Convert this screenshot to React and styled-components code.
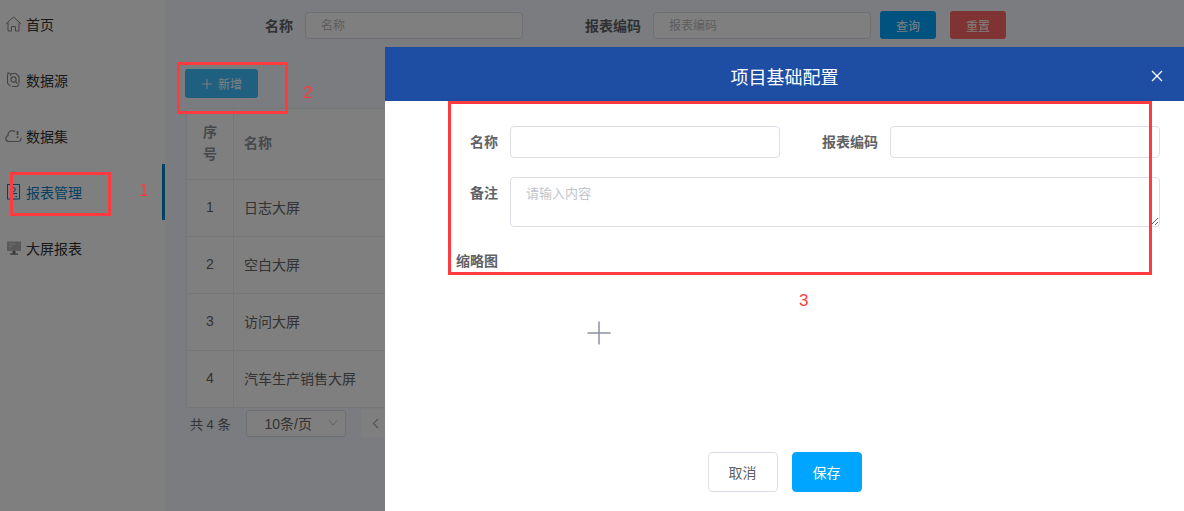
import React from 'react'
import styled, { createGlobalStyle } from 'styled-components'

const GlobalStyle = createGlobalStyle`
  html, body {
    margin: 0;
    padding: 0;
    height: 100%;
    overflow: hidden;
    background: #fff;
    font-family: "Liberation Sans", "Noto Sans CJK SC", sans-serif;
    font-size: 14px;
  }
  * {
    box-sizing: border-box;
  }
`

const menu = [
  { name: '首页', icon: 'home' },
  { name: '数据源', icon: 'source' },
  { name: '数据集', icon: 'cloud' },
  { name: '报表管理', icon: 'report', active: true },
  { name: '大屏报表', icon: 'screen' }
]

const reports = ['日志大屏', '空白大屏', '访问大屏', '汽车生产销售大屏']

const NavIcon = ({ type }) => {
  if (type === 'home') {
    return (
      <svg width="17" height="16" viewBox="0 0 17 16" fill="none" stroke="currentColor" strokeWidth="1">
        <path d="M.8 8 8.500 1l7.700 7" />
        <path d="M3 6.500V15h3.500v-4.500h4V15H14V6.500" />
      </svg>
    )
  }
  if (type === 'source') {
    return (
      <svg width="17" height="16" viewBox="0 0 17 16" fill="none" stroke="currentColor" strokeWidth="1.100">
        <path d="M5.500 1.500 3 1 2.500 4v7l3 3.500" />
        <path d="M5 3.500 7 1.500h4l3 3v7" />
        <path d="M14 12.500l-2 2H7" />
        <circle cx="8.500" cy="7.500" r="2.600" />
        <path d="M10.500 9.500l2 2" />
      </svg>
    )
  }
  if (type === 'cloud') {
    return (
      <svg width="17" height="16" viewBox="0 0 17 16" fill="none" stroke="currentColor" strokeWidth="1.200">
        <path d="M13.500 13.500H3.800A3 3 0 0 1 3 7.600 4.400 4.400 0 0 1 10 3.500" />
        <path d="M13.500 13.500a2.800 2.800 0 0 0 2.400-3.500" />
        <path d="M12.500 3v4M12.500 8.500v1.500" strokeWidth="1.800" />
      </svg>
    )
  }
  if (type === 'report') {
    return (
      <svg width="17" height="16" viewBox="0 0 17 16" fill="none" stroke="currentColor" strokeWidth="1">
        <rect x="2.500" y=".5" width="12" height="14.500" />
        <circle cx="8.500" cy="5.500" r="1.800" />
        <path d="M5 9.500h7M5 12.500h1.500M10.500 12.500H12" />
      </svg>
    )
  }
  return (
    <svg width="17" height="16" viewBox="0 0 17 16" fill="#b4b4b4">
      <path d="M2 1.500h14v9.500H2z" />
      <path d="M4 3.500h6v1H4zM4 6h3v1H4z" fill="#e2e2e2" />
      <path d="M7.500 11h3v2.500h-3zM5 13.500h8v1.200H5z" fill="#777" />
    </svg>
  )
}

const Shell = styled.div`
  display: flex;
  height: 100vh;
  overflow: hidden;
  background: #f6f8fe;
`

const Sidebar = styled.aside`
  flex: none;
  width: 165px;
  background: #fff;
  margin-top: -4px;
`

const NavItem = styled.div`
  display: flex;
  align-items: center;
  gap: 4px;
  height: 56px;
  padding-left: 5px;
  color: ${props => (props.$active ? '#0a7fc4' : '#333')};
  border-right: 3px solid ${props => (props.$active ? '#0a7fc4' : 'transparent')};
  svg {
    color: ${props => (props.$active ? '#0a7fc4' : '#888')};
  }
`

const Main = styled.main`
  flex: 1;
  min-width: 0;
  padding: 11px 0 0 21px;
`

const FilterBar = styled.div`
  display: flex;
  align-items: center;
  padding-left: 79px;
  height: 28px;
`

const FilterLabel = styled.label`
  font-weight: bold;
  color: #606266;
  margin-right: 12px;
  margin-left: ${props => props.$offset || 0}px;
`

const FilterInput = styled.div`
  width: 218px;
  height: 27px;
  margin-top: 1px;
  padding-left: 15px;
  border: 1px solid #dcdfe6;
  border-radius: 4px;
  background: #fff;
  font-size: 12px;
  line-height: 26px;
  color: #bbb;
`

const QueryButton = styled.button`
  width: 56px;
  height: 28px;
  margin-left: ${props => props.$offset}px;
  padding: 0;
  border: none;
  border-radius: 3px;
  background: ${props => props.$bg};
  color: #fff;
  font: inherit;
  font-size: 12px;
`

const AddButton = styled.button`
  display: flex;
  align-items: center;
  justify-content: center;
  gap: 5px;
  width: 73px;
  height: 29px;
  margin: 30px 0 10px -1px;
  padding: 0;
  border: none;
  border-radius: 3px;
  background: #3ebfff;
  color: #fff;
  font: inherit;
  font-size: 12px;
`

const Table = styled.table`
  width: 998px;
  border-collapse: collapse;
  table-layout: fixed;
  background: #fff;
  color: #666;
  th, td {
    border: 1px solid #ebeef5;
    padding: 0 10px 3px;
    text-align: left;
    font-weight: normal;
  }
  th {
    height: 71px;
    font-weight: bold;
    color: #909399;
    line-height: 22px;
  }
  td {
    height: 57px;
  }
  th:first-child, td:first-child {
    text-align: center;
  }
`

const Pagination = styled.div`
  display: flex;
  align-items: center;
  margin-top: 1px;
  padding-left: 4px;
  color: #666;
  font-size: 13px;
`

const PageSelect = styled.div`
  display: flex;
  align-items: center;
  justify-content: space-between;
  width: 100px;
  height: 27px;
  margin-left: 16px;
  padding: 0 7px 0 17px;
  border: 1px solid #dcdfe6;
  border-radius: 3px;
  background: #fff;
  font-size: 14px;
  color: #666;
`

const PrevButton = styled.div`
  display: flex;
  align-items: center;
  justify-content: center;
  width: 28px;
  height: 28px;
  margin-left: 15px;
  background: #fff;
  color: #b0b4bb;
`

const Mask = styled.div`
  position: fixed;
  inset: 0;
  background: rgba(0, 0, 0, 0.5);
`

const Modal = styled.section`
  position: fixed;
  top: 47px;
  left: 385px;
  right: 0;
  bottom: 0;
  display: flex;
  flex-direction: column;
  background: #fff;
`

const ModalHeader = styled.header`
  position: relative;
  flex: none;
  height: 54px;
  background: #1e4ea3;
  color: #fff;
  font-size: 18px;
  line-height: 62px;
  text-align: center;
`

const CloseIcon = styled.svg`
  position: absolute;
  top: 23px;
  right: 21px;
`

const ModalBody = styled.div`
  flex: 1;
  padding-top: 25px;
`

const FormRow = styled.div`
  display: flex;
  align-items: ${props => props.$align || 'center'};
  margin-bottom: ${props => props.$gap || 0}px;
`

const FormLabel = styled.label`
  flex: none;
  width: ${props => props.$width}px;
  margin-right: ${props => props.$space || 12}px;
  text-align: right;
  font-weight: bold;
  color: #606266;
  line-height: ${props => props.$line || 32}px;
`

const TextInput = styled.div`
  flex: none;
  width: 270px;
  height: 32px;
  border: 1px solid #dcdfe6;
  border-radius: 4px;
`

const TextArea = styled.textarea`
  display: block;
  flex: none;
  width: 650px;
  height: 50px;
  padding: 7px 15px;
  border: 1px solid #dcdfe6;
  border-radius: 4px;
  outline: none;
  font: inherit;
  font-size: 13px;
  line-height: 18px;
  &::placeholder {
    color: #c0c4cc;
    opacity: 1;
  }
`

const UploadBox = styled.div`
  display: flex;
  align-items: center;
  justify-content: center;
  width: 178px;
  height: 178px;
  color: #8c939d;
`

const ModalFooter = styled.div`
  display: flex;
  justify-content: center;
  gap: 14px;
  margin-top: 30px;
`

const FooterButton = styled.button`
  width: 70px;
  height: 40px;
  padding: 0;
  border: 1px solid ${props => (props.$primary ? '#00a5ff' : '#dcdfe6')};
  border-radius: 4px;
  background: ${props => (props.$primary ? '#00a5ff' : '#fff')};
  color: ${props => (props.$primary ? '#fff' : '#606266')};
  font: inherit;
  font-size: 14px;
`

const RedBox = styled.div`
  position: fixed;
  left: ${props => props.$x}px;
  top: ${props => props.$y}px;
  width: ${props => props.$w}px;
  height: ${props => props.$h}px;
  border: 3px solid #ff3b3f;
`

const RedNumber = styled.span`
  position: fixed;
  left: ${props => props.$x}px;
  top: ${props => props.$y}px;
  color: #ff3b3f;
  font-size: 17px;
  line-height: 18px;
`

const App = () => (
  <>
    <GlobalStyle />
    <Shell>
      <Sidebar>
        {menu.map(item => (
          <NavItem key={item.name} $active={item.active}>
            <NavIcon type={item.icon} />
            {item.name}
          </NavItem>
        ))}
      </Sidebar>
      <Main>
        <FilterBar>
          <FilterLabel>名称</FilterLabel>
          <FilterInput>名称</FilterInput>
          <FilterLabel $offset={62}>报表编码</FilterLabel>
          <FilterInput>报表编码</FilterInput>
          <QueryButton $offset={9} $bg="#00a5ff">查询</QueryButton>
          <QueryButton $offset={14} $bg="#ff6666">重置</QueryButton>
        </FilterBar>
        <AddButton>
          <svg width="12" height="12" viewBox="0 0 12 12" stroke="currentColor">
            <path d="M6 1v10M1 6h10" />
          </svg>
          新增
        </AddButton>
        <Table>
          <colgroup>
            <col width="47" />
            <col />
          </colgroup>
          <thead>
            <tr>
              <th>序号</th>
              <th>名称</th>
            </tr>
          </thead>
          <tbody>
            {reports.map((name, i) => (
              <tr key={name}>
                <td>{i + 1}</td>
                <td>{name}</td>
              </tr>
            ))}
          </tbody>
        </Table>
        <Pagination>
          共 4 条
          <PageSelect>
            10条/页
            <svg width="10" height="6" viewBox="0 0 10 6" fill="none" stroke="#c0c4cc">
              <path d="M1 .5l4 4.500 4-4.500" />
            </svg>
          </PageSelect>
          <PrevButton>
            <svg width="7" height="11" viewBox="0 0 7 11" fill="none" stroke="currentColor" strokeWidth="1.500">
              <path d="M6 1 1.500 5.500 6 10" />
            </svg>
          </PrevButton>
        </Pagination>
      </Main>
    </Shell>
    <Mask />
    <Modal>
      <ModalHeader>
        项目基础配置
        <CloseIcon width="12" height="12" viewBox="0 0 12 12" stroke="#fff" strokeWidth="1.300">
          <path d="M1 1l10 10M11 1 1 11" />
        </CloseIcon>
      </ModalHeader>
      <ModalBody>
        <FormRow $gap={19}>
          <FormLabel $width={113}>名称</FormLabel>
          <TextInput />
          <FormLabel $width={98}>报表编码</FormLabel>
          <TextInput />
        </FormRow>
        <FormRow $align="flex-start" $gap={17}>
          <FormLabel $width={113}>备注</FormLabel>
          <TextArea placeholder="请输入内容" />
        </FormRow>
        <FormRow $align="flex-start">
          <FormLabel $width={113} $line={34}>缩略图</FormLabel>
          <UploadBox>
            <svg width="24" height="24" viewBox="0 0 24 24" stroke="currentColor" strokeWidth="1.500">
              <path d="M12 .5v23M.5 12h23" />
            </svg>
          </UploadBox>
        </FormRow>
        <ModalFooter>
          <FooterButton>取消</FooterButton>
          <FooterButton $primary>保存</FooterButton>
        </ModalFooter>
      </ModalBody>
    </Modal>
    <RedBox $x={10} $y={172} $w={101} $h={44} />
    <RedBox $x={177} $y={62} $w={111} $h={52} />
    <RedBox $x={448} $y={101} $w={704} $h={174} />
    <RedNumber $x={139} $y={182}>1</RedNumber>
    <RedNumber $x={303} $y={84}>2</RedNumber>
    <RedNumber $x={799} $y={292}>3</RedNumber>
  </>
)

export default App
